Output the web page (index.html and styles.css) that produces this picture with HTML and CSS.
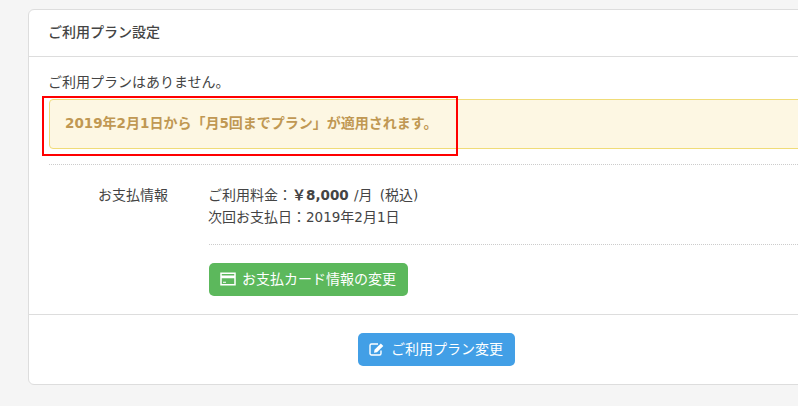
FILE: index.html
```html
<!DOCTYPE html>
<html lang="ja">
<head>
<meta charset="utf-8">
<title>ご利用プラン設定</title>
<link rel="stylesheet" href="styles.css">
</head>
<body>
<main class="card">
  <header class="card-head">ご利用プラン設定</header>
  <section class="card-body">
    <p class="lead">ご利用プランはありません。</p>
    <div class="alert"><span class="num">2019</span>年<span class="num">2</span>月<span class="num">1</span>日から「月<span class="num">5</span>回までプラン」が適用されます。</div>
    <div class="info">
      <div class="info-label">お支払情報</div>
      <div class="info-value">
        <p class="line">ご利用料金：<strong class="yen">￥</strong><strong class="price">8,000</strong><span class="num unit"> /</span>月<span class="num tax"> (</span>税込<span class="num">)</span></p>
        <p class="line">次回お支払日：<span class="num">2019</span>年<span class="num">2</span>月<span class="num">1</span>日</p>
        <div class="actions">
          <a class="btn btn-green">
            <svg class="icon" viewBox="0 0 16 14" aria-hidden="true"><path fill="none" stroke="currentColor" stroke-width="1.5" d="M1 1.200h14v11.600H1z"/><path fill="currentColor" d="M1 3.600h14v2.600H1zM3 9.800h3v1H3z"/></svg>
            お支払カード情報の変更
          </a>
        </div>
      </div>
    </div>
  </section>
  <footer class="card-foot">
    <a class="btn btn-blue">
      <svg class="icon" viewBox="0 0 16 14" aria-hidden="true"><path fill="none" stroke="currentColor" stroke-width="1.4" d="M12 8.500v3a1.500 1.500 0 0 1-1.500 1.500h-8A1.500 1.500 0 0 1 1 11.500v-8A1.500 1.500 0 0 1 2.500 2H9"/><path fill="currentColor" d="M5.500 7.800 11.800 1.500l2.500 2.500-6.300 6.300-3 .5z"/></svg>
      ご利用プラン変更
    </a>
  </footer>
</main>
<div class="highlight"></div>
</body>
</html>
```
FILE: styles.css
```css
html, body {
  margin: 0;
  height: 100%;
  overflow: hidden;
}
body {
  position: relative;
  background: #f5f5f5;
  color: #444;
  font-family: "Noto Sans CJK JP", sans-serif;
  font-size: 14px;
  line-height: 22px;
  padding: 9px 0 0 28px;
  box-sizing: border-box;
  text-spacing-trim: space-all;
}
p { margin: 0; }
.card {
  width: 817px;
  background: #fff;
  border: 1px solid #ddd;
  border-radius: 6px;
  box-sizing: border-box;
}
.card-head {
  height: 47px;
  padding: 0 19px;
  line-height: 42px;
  font-weight: 500;
  border-bottom: 1px solid #ddd;
  box-sizing: border-box;
}
.card-body {
  padding: 13px 0 0 20px;
}
.lead {
  height: 29px;
  margin-left: -1px;
}
.alert {
  height: 50px;
  box-sizing: border-box;
  padding: 0 15px;
  line-height: 44px;
  font-weight: 700;
  color: #c09853;
  background: #fdf7e3;
  border: 1px solid #f0dc78;
  border-radius: 4px;
}
.info {
  display: flex;
  margin-top: 15px;
  padding: 18px 0 18px;
  border-top: 1px dotted #ccc;
}
.info-label {
  width: 160px;
  padding-left: 49px;
  box-sizing: border-box;
}
.info-value {
  flex: 1;
  margin-left: -1px;
}
.num {
  font-family: "DejaVu Sans", sans-serif;
  font-size: 13.5px;
  line-height: 1;
}
.unit {
  margin-left: 1px;
}
.tax {
  margin-left: 3px;
}
.yen {
  font-weight: 700;
}
.price {
  font-family: "DejaVu Sans", sans-serif;
  font-weight: 700;
  font-size: 13.5px;
  line-height: 1;
}
.actions {
  margin-top: 17px;
  margin-left: 1px;
  padding-top: 18px;
  border-top: 1px dotted #ccc;
}
.btn {
  display: inline-flex;
  align-items: center;
  gap: 6px;
  height: 33px;
  padding: 0 12px 4px 11px;
  border-radius: 5px;
  color: #fff;
  box-sizing: border-box;
}
.btn-green { background: #5cb85c; }
.btn-blue { background: #429fe6; }
.icon {
  width: 16px;
  height: 14px;
  margin-top: 3px;
}
.card-foot {
  display: flex;
  justify-content: center;
  height: 70px;
  padding-top: 18px;
  border-top: 1px solid #ddd;
  box-sizing: border-box;
}
.highlight {
  position: absolute;
  left: 42px;
  top: 96px;
  width: 416px;
  height: 60px;
  border: 2px solid #f00;
  box-sizing: border-box;
}
```
